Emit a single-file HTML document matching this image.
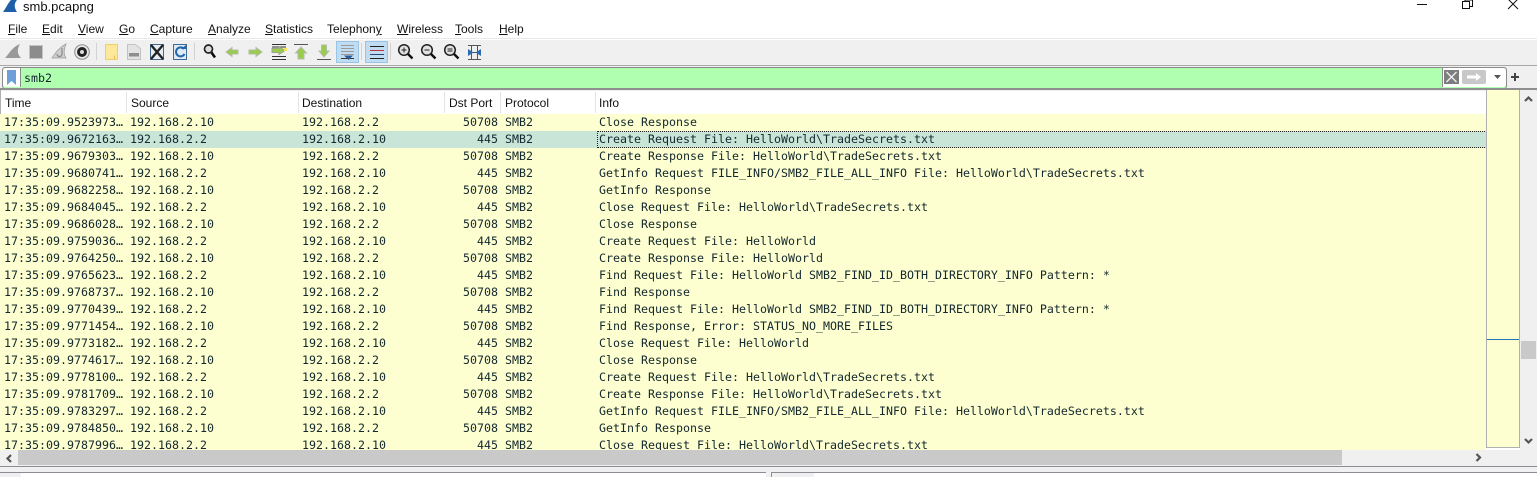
<!DOCTYPE html>
<html><head><meta charset="utf-8">
<style>
html,body{margin:0;padding:0;background:#fff}
body{width:1537px;height:477px;position:relative;overflow:hidden;font-family:"Liberation Sans",sans-serif;color:#111}
.a{position:absolute}
.menu span{position:absolute;top:21px;font-size:12px;line-height:16px;white-space:nowrap}
u{text-decoration:underline}
.h span{position:absolute;top:95px;font-size:12px;line-height:16px;white-space:nowrap}
.sep{position:absolute;top:92px;width:1px;height:21px;background:#e4e4e4}
#list{position:absolute;left:0;top:114px;width:1486px;height:336px;background:#feffd0;overflow:hidden;font-family:"DejaVu Sans Mono",monospace;font-size:11.63px;color:#12272e}
.r{position:absolute;left:0;width:1486px;height:17px;line-height:17px;white-space:pre}
.r b{font-weight:normal;position:absolute;top:0}
.t{left:4px}.s{left:130px}.d{left:302px}.p{width:60px;left:438px;text-align:right}.o{left:505px}.i{left:599px}
.sel{background:#c8e5d8}
svg{position:absolute;overflow:visible}
</style></head><body>
<!-- title bar -->
<svg style="left:2px;top:0" width="16" height="12" viewBox="0 0 16 12"><path d="M1 12 C4 8 6 3 9 0 L15 0 C12 3 12 8 15 12Z" fill="#1f5fa8"/></svg>
<div class="a" style="left:23px;top:-2px;font-size:13px;line-height:18px">smb.pcapng</div>
<div class="a" style="left:1417px;top:4px;width:10px;height:1px;background:#111"></div>
<svg style="left:1462px;top:0" width="11" height="9"><path d="M0.5 1.5H7.5V8.5H0.5ZM3 1.5V0H10.5V6.5H7.5" fill="none" stroke="#111"/></svg>
<svg style="left:1508px;top:0" width="10" height="9"><path d="M0 -1L10 9M10 -1L0 9" stroke="#111" fill="none"/></svg>
<!-- menu -->
<div class="menu">
<span style="left:8px"><u>F</u>ile</span>
<span style="left:42px"><u>E</u>dit</span>
<span style="left:78px"><u>V</u>iew</span>
<span style="left:119px"><u>G</u>o</span>
<span style="left:150px"><u>C</u>apture</span>
<span style="left:208px"><u>A</u>nalyze</span>
<span style="left:265px"><u>S</u>tatistics</span>
<span style="left:327px">Telephon<u>y</u></span>
<span style="left:397px"><u>W</u>ireless</span>
<span style="left:455px"><u>T</u>ools</span>
<span style="left:499px"><u>H</u>elp</span>
</div>
<!-- toolbar -->
<div class="a" style="left:0;top:38px;width:1537px;height:27px;background:#f0f0f0;border-top:1px solid #e8e8e8;box-sizing:border-box"></div>
<div class="a" style="left:0;top:39px;width:1537px;height:1px;background:#fff"></div>
<div class="a" style="left:0;top:65px;width:1537px;height:24px;background:#f0f0f0;border-top:1px solid #a8a8a8;box-sizing:border-box"></div>
<svg style="left:0;top:40px" width="540" height="25" viewBox="0 0 540 25">
<path d="M5 18 C9 14 12 7 20 4 C17 9 17 14 21 18Z" fill="#9a9a9a"/>
<rect x="29.500" y="5.500" width="13" height="13" fill="#8c8c8c" stroke="#c4c4c4"/>
<path d="M52 18 C55 14 58 8 66 4 C64 9 63 14 66 18Z" fill="#cfcfcf" stroke="#999" stroke-width=".7"/>
<path d="M62 8 v6 a2.500 2.500 0 0 1 -5 0" fill="none" stroke="#888" stroke-width="1.200"/>
<circle cx="82" cy="12" r="7.300" fill="#e9e9e9" stroke="#8a8a8a"/>
<circle cx="82" cy="12" r="5" fill="#222"/>
<circle cx="82" cy="12" r="2" fill="#ddd"/>
<rect x="96" y="3" width="1" height="17" fill="#d2d2d2"/>
<path d="M105.500 4.500H117.500V19.500H105.500Z" fill="#fde79a" stroke="#f0cf6a"/>
<path d="M114.500 15.500V19.500" stroke="#e2bd5a"/>
<path d="M127.500 4.500H135L140.500 8.500V19.500H127.500Z" fill="#e3e3e3" stroke="#c2c2c2"/>
<rect x="129" y="13" width="10" height="3.500" fill="#8d8d8d"/>
<rect x="150.500" y="4.500" width="13" height="15" fill="#e7eef3" stroke="#45678a"/>
<path d="M151 5L163 19M163 5L151 19" stroke="#222" stroke-width="2.400"/>
<rect x="173.500" y="4.500" width="13" height="15" fill="#dfeaf5" stroke="#3d6a97"/>
<path d="M184 9 a4.500 4.500 0 1 0 0.500 5" fill="none" stroke="#1e66b0" stroke-width="2"/>
<path d="M181 9H186V5Z" fill="#1e66b0"/>
<rect x="194" y="3" width="1" height="17" fill="#d2d2d2"/>
<circle cx="208.500" cy="9" r="4" fill="#ddd" stroke="#222" stroke-width="1.700"/>
<path d="M211.500 12.500L215 17.500" stroke="#111" stroke-width="2.600"/>
<path d="M226 12L232 7.500V10H238V14H232V16.500Z" fill="#98cc4a" stroke="#b4bcab"/>
<path d="M262 12L256 7.500V10H249V14H256V16.500Z" fill="#98cc4a" stroke="#b4bcab"/>
<path d="M272 7H286M272 16.500H286M272 19.500H286M272 4.500H286" stroke="#333"/>
<path d="M285 10.500L279 6.500V8.500H272V12.500H279V14.500Z" fill="#98cc4a" stroke="#9aa58a"/>
<rect x="284" y="8" width="3" height="3" fill="#f5e25a"/>
<path d="M294 4.500H308" stroke="#555"/>
<path d="M301 7L306.500 13H304V19H298V13H295.500Z" fill="#98cc4a" stroke="#b4bcab"/>
<path d="M317 19.500H331" stroke="#555"/>
<path d="M324 17L329 11H326.500V5H321.500V11H319Z" fill="#98cc4a" stroke="#b4bcab"/>
<rect x="336.500" y="1.500" width="22" height="21" fill="#bfdcf3" stroke="#98c4e8"/>
<path d="M341 5.500H354M341 8.500H354M341 11.500H354M341 14.500H354" stroke="#9a9a9a"/>
<path d="M341 18.500H354" stroke="#333"/>
<path d="M344 15.500H353L348.500 20Z" fill="#2a5c9a"/>
<rect x="361" y="3" width="1" height="17" fill="#d2d2d2"/>
<rect x="365.500" y="1.500" width="22" height="21" fill="#bfdcf3" stroke="#98c4e8"/>
<path d="M370 6.500H384M370 18.500H384" stroke="#222"/>
<path d="M370 10.500H384" stroke="#c5303a"/>
<path d="M370 14.500H384" stroke="#26446f"/>
<rect x="390" y="3" width="1" height="17" fill="#d2d2d2"/>
<g fill="#e2e2e2" stroke="#222" stroke-width="1.500">
<circle cx="404" cy="10" r="5.300"/><circle cx="427" cy="10" r="5.300"/><circle cx="450" cy="10" r="5.300"/></g>
<path d="M408 14L412.500 18.500M431 14L435.500 18.500M454 14L458.500 18.500" stroke="#111" stroke-width="2.400"/>
<path d="M401.500 10H406.500M404 7.500V12.500M424.500 10H429.500M447.500 9H452.500M447.500 11H452.500" stroke="#222"/>
<path d="M468 5.500H481M468 19.500H481M468 12.500H481M471.500 5V20M477.500 5V20" stroke="#555"/>
<path d="M468 9L473.500 12.500L468 16ZM481 9L475.500 12.500L481 16Z" fill="#2e6bb0"/>
</svg>
<!-- filter -->
<div class="a" style="left:2px;top:67px;width:1503px;height:20px;background:#b0ffb0;border:1px solid #8b8b8b;border-radius:3px;box-sizing:content-box"></div>
<div class="a" style="left:3px;top:68px;width:17px;height:19px;background:#fff;border-radius:3px 0 0 3px;border-right:1px solid #8b8b8b"></div>
<svg style="left:7px;top:70px" width="9" height="15"><path d="M0 0H9V15L4.500 11L0 15Z" fill="#6f9fd8"/></svg>
<div class="a" style="left:24px;top:70px;font-family:'DejaVu Sans Mono',monospace;font-size:11.63px;line-height:16px;color:#12272e">smb2</div>
<div class="a" style="left:1442px;top:68px;width:63px;height:19px;background:#fff;border-left:1px solid #8b8b8b;border-radius:0 3px 3px 0"></div>
<svg style="left:1444px;top:70px" width="62" height="15">
<rect width="15" height="14" fill="#7d7d7d"/><path d="M2.500 2L12.500 12M12.500 2L2.500 12" stroke="#eee" stroke-width="1.400"/>
<rect x="18" width="24" height="14" rx="2" fill="#c8c8c8"/><path d="M23 5.500H32V3L37 7L32 11V8.500H23Z" fill="#fff"/>
<path d="M50 5H57L53.500 9Z" fill="#555"/>
</svg>
<svg style="left:1511px;top:73px" width="8" height="8"><path d="M0 4H8M4 0V8" stroke="#444" stroke-width="2"/></svg>
<!-- header -->
<div class="a" style="left:0;top:88px;width:1537px;height:2px;background:#8f8f8f"></div>
<div class="a" style="left:0;top:90px;width:1486px;height:24px;background:#fff;border-top:1px solid #f0f0f0;box-sizing:border-box"></div>
<div class="a" style="left:0;top:90px;width:1px;height:360px;background:#b0b0b0"></div>
<div class="h">
<span style="left:5px">Time</span><span style="left:131px">Source</span><span style="left:302px">Destination</span><span style="left:449px">Dst Port</span><span style="left:505px">Protocol</span><span style="left:599px">Info</span>
</div>
<i class="sep" style="left:126px"></i><i class="sep" style="left:298px"></i><i class="sep" style="left:444px"></i><i class="sep" style="left:500px"></i><i class="sep" style="left:595px"></i>
<!-- list -->
<div id="list">
<div class="r" style="top:0"><b class="t">17:35:09.9523973…</b><b class="s">192.168.2.10</b><b class="d">192.168.2.2</b><b class="p">50708</b><b class="o">SMB2</b><b class="i">Close Response</b></div>
<div class="r sel" style="top:17px"><b class="t">17:35:09.9672163…</b><b class="s">192.168.2.2</b><b class="d">192.168.2.10</b><b class="p">445</b><b class="o">SMB2</b><b class="i">Create Request File: HelloWorld\TradeSecrets.txt</b><i class="a" style="left:597px;top:0;width:888px;border:1px dotted #222;box-sizing:content-box;height:15px"></i></div>
<div class="r" style="top:34px"><b class="t">17:35:09.9679303…</b><b class="s">192.168.2.10</b><b class="d">192.168.2.2</b><b class="p">50708</b><b class="o">SMB2</b><b class="i">Create Response File: HelloWorld\TradeSecrets.txt</b></div>
<div class="r" style="top:51px"><b class="t">17:35:09.9680741…</b><b class="s">192.168.2.2</b><b class="d">192.168.2.10</b><b class="p">445</b><b class="o">SMB2</b><b class="i">GetInfo Request FILE_INFO/SMB2_FILE_ALL_INFO File: HelloWorld\TradeSecrets.txt</b></div>
<div class="r" style="top:68px"><b class="t">17:35:09.9682258…</b><b class="s">192.168.2.10</b><b class="d">192.168.2.2</b><b class="p">50708</b><b class="o">SMB2</b><b class="i">GetInfo Response</b></div>
<div class="r" style="top:85px"><b class="t">17:35:09.9684045…</b><b class="s">192.168.2.2</b><b class="d">192.168.2.10</b><b class="p">445</b><b class="o">SMB2</b><b class="i">Close Request File: HelloWorld\TradeSecrets.txt</b></div>
<div class="r" style="top:102px"><b class="t">17:35:09.9686028…</b><b class="s">192.168.2.10</b><b class="d">192.168.2.2</b><b class="p">50708</b><b class="o">SMB2</b><b class="i">Close Response</b></div>
<div class="r" style="top:119px"><b class="t">17:35:09.9759036…</b><b class="s">192.168.2.2</b><b class="d">192.168.2.10</b><b class="p">445</b><b class="o">SMB2</b><b class="i">Create Request File: HelloWorld</b></div>
<div class="r" style="top:136px"><b class="t">17:35:09.9764250…</b><b class="s">192.168.2.10</b><b class="d">192.168.2.2</b><b class="p">50708</b><b class="o">SMB2</b><b class="i">Create Response File: HelloWorld</b></div>
<div class="r" style="top:153px"><b class="t">17:35:09.9765623…</b><b class="s">192.168.2.2</b><b class="d">192.168.2.10</b><b class="p">445</b><b class="o">SMB2</b><b class="i">Find Request File: HelloWorld SMB2_FIND_ID_BOTH_DIRECTORY_INFO Pattern: *</b></div>
<div class="r" style="top:170px"><b class="t">17:35:09.9768737…</b><b class="s">192.168.2.10</b><b class="d">192.168.2.2</b><b class="p">50708</b><b class="o">SMB2</b><b class="i">Find Response</b></div>
<div class="r" style="top:187px"><b class="t">17:35:09.9770439…</b><b class="s">192.168.2.2</b><b class="d">192.168.2.10</b><b class="p">445</b><b class="o">SMB2</b><b class="i">Find Request File: HelloWorld SMB2_FIND_ID_BOTH_DIRECTORY_INFO Pattern: *</b></div>
<div class="r" style="top:204px"><b class="t">17:35:09.9771454…</b><b class="s">192.168.2.10</b><b class="d">192.168.2.2</b><b class="p">50708</b><b class="o">SMB2</b><b class="i">Find Response, Error: STATUS_NO_MORE_FILES</b></div>
<div class="r" style="top:221px"><b class="t">17:35:09.9773182…</b><b class="s">192.168.2.2</b><b class="d">192.168.2.10</b><b class="p">445</b><b class="o">SMB2</b><b class="i">Close Request File: HelloWorld</b></div>
<div class="r" style="top:238px"><b class="t">17:35:09.9774617…</b><b class="s">192.168.2.10</b><b class="d">192.168.2.2</b><b class="p">50708</b><b class="o">SMB2</b><b class="i">Close Response</b></div>
<div class="r" style="top:255px"><b class="t">17:35:09.9778100…</b><b class="s">192.168.2.2</b><b class="d">192.168.2.10</b><b class="p">445</b><b class="o">SMB2</b><b class="i">Create Request File: HelloWorld\TradeSecrets.txt</b></div>
<div class="r" style="top:272px"><b class="t">17:35:09.9781709…</b><b class="s">192.168.2.10</b><b class="d">192.168.2.2</b><b class="p">50708</b><b class="o">SMB2</b><b class="i">Create Response File: HelloWorld\TradeSecrets.txt</b></div>
<div class="r" style="top:289px"><b class="t">17:35:09.9783297…</b><b class="s">192.168.2.2</b><b class="d">192.168.2.10</b><b class="p">445</b><b class="o">SMB2</b><b class="i">GetInfo Request FILE_INFO/SMB2_FILE_ALL_INFO File: HelloWorld\TradeSecrets.txt</b></div>
<div class="r" style="top:306px"><b class="t">17:35:09.9784850…</b><b class="s">192.168.2.10</b><b class="d">192.168.2.2</b><b class="p">50708</b><b class="o">SMB2</b><b class="i">GetInfo Response</b></div>
<div class="r" style="top:323px"><b class="t">17:35:09.9787996…</b><b class="s">192.168.2.2</b><b class="d">192.168.2.10</b><b class="p">445</b><b class="o">SMB2</b><b class="i">Close Request File: HelloWorld\TradeSecrets.txt</b></div>
</div>
<!-- minimap -->
<div class="a" style="left:1486px;top:90px;width:32px;height:357px;background:#feffd0;border:1px solid #b0b0b0;border-top:0"></div>
<div class="a" style="left:1487px;top:339px;width:32px;height:1px;background:#1f78b8"></div>
<!-- vertical scrollbar -->
<div class="a" style="left:1520px;top:90px;width:17px;height:375px;background:#f0f0f0"></div>
<div class="a" style="left:1521px;top:341px;width:15px;height:18px;background:#c9c9c9"></div>
<svg style="left:1524px;top:96px" width="9" height="6"><path d="M1 5L4.500 1.500L8 5" fill="none" stroke="#555" stroke-width="2.200"/></svg>
<svg style="left:1524px;top:438px" width="9" height="6"><path d="M1 1L4.500 4.500L8 1" fill="none" stroke="#555" stroke-width="2.200"/></svg>
<!-- horizontal scrollbar -->
<div class="a" style="left:0;top:450px;width:1520px;height:15px;background:#f0f0f0"></div>
<div class="a" style="left:18px;top:450px;width:1324px;height:15px;background:#c9c9c9"></div>
<svg style="left:6px;top:454px" width="7" height="9"><path d="M5 1L1.500 4.500L5 8" fill="none" stroke="#555" stroke-width="2.200"/></svg>
<svg style="left:1475px;top:453px" width="7" height="9"><path d="M1.500 1L5 4.500L1.500 8" fill="none" stroke="#555" stroke-width="2.200"/></svg>
<!-- bottom panes -->
<div class="a" style="left:0;top:465px;width:1537px;height:12px;background:#f0f0f0"></div>
<div class="a" style="left:0;top:466px;width:1537px;height:1px;background:#8a8e94"></div>
<div class="a" style="left:0;top:472px;width:766px;height:5px;background:#f0f0f0;border-top:1px solid #8a8e94;border-right:1px solid #8a8e94;box-sizing:border-box"></div>
<div class="a" style="left:21px;top:473px;width:745px;height:4px;background:#fff"></div>
<div class="a" style="left:771px;top:472px;width:766px;height:5px;background:#f0f0f0;border-top:1px solid #8a8e94;border-left:1px solid #8a8e94;box-sizing:border-box"></div>
<div class="a" style="left:814px;top:473px;width:723px;height:4px;background:#fff"></div>
</body></html>
